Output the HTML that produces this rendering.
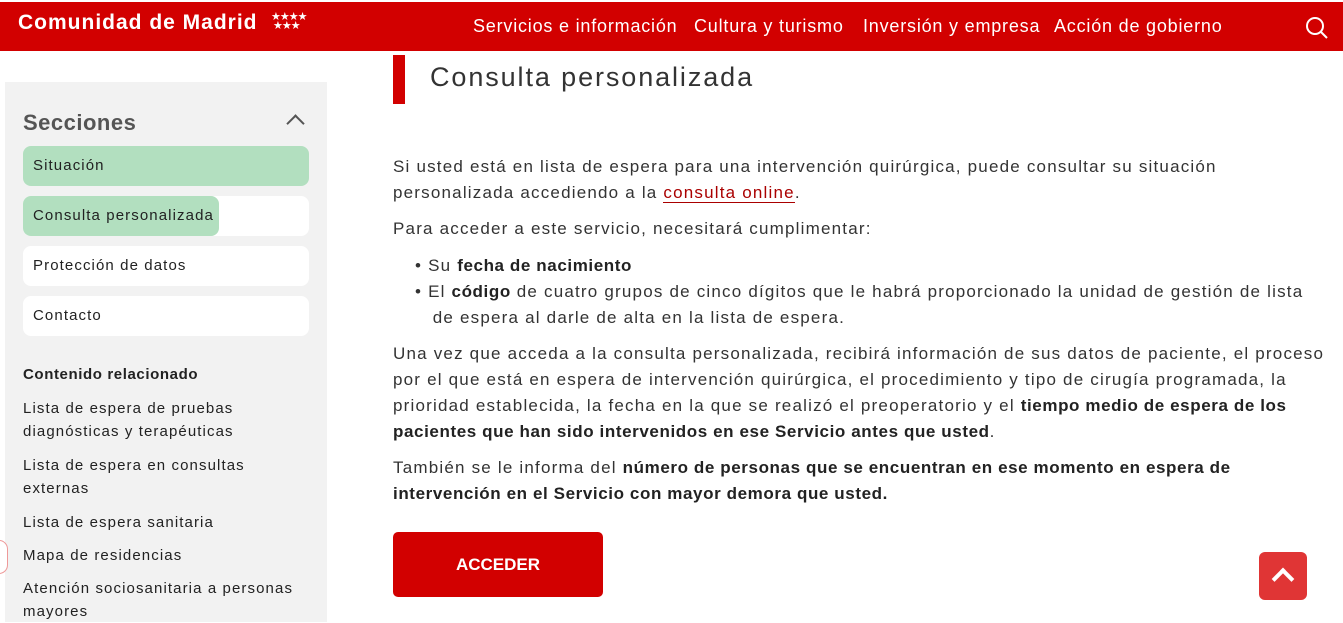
<!DOCTYPE html>
<html><head><meta charset="utf-8"><style>
*{margin:0;padding:0;box-sizing:border-box}
body{width:1343px;height:611px;overflow:hidden;background:#fff;font-family:"Liberation Sans",sans-serif;color:#333;position:relative}
.hdr{position:absolute;left:0;top:2px;width:1343px;height:49px;background:#d20000;color:#fff}
.logo{position:absolute;left:18px;top:9px;font-size:21px;font-weight:bold;letter-spacing:1px}
.stars{position:absolute;left:271px;top:11px;font-size:11px;line-height:9px;letter-spacing:-1px}
.nav{position:absolute;top:14px;font-size:18px;letter-spacing:.8px;white-space:nowrap}
.side{position:absolute;left:5px;top:82px;width:322px;height:540px;background:#f2f2f2}
.side h2{position:absolute;left:18px;top:28px;font-size:22px;color:#555;font-weight:bold;letter-spacing:.5px}
.chev{position:absolute;left:284px;top:35px;width:13px;height:13px;border-left:2px solid #555;border-top:2px solid #555;transform:rotate(45deg)}
.it{position:absolute;left:18px;width:286px;height:40px;background:#fff;border-radius:8px;font-size:15px;padding:11px 10px;color:#222;letter-spacing:1.1px;white-space:nowrap}
.g{background:#b2dfbf}
.rel{position:absolute;left:18px;font-size:15px;line-height:23px;color:#222;letter-spacing:1.1px;white-space:nowrap}
.main{position:absolute;left:393px;width:950px;font-size:17px;line-height:26px;color:#333;letter-spacing:1.2px;white-space:nowrap}
b{color:#222;letter-spacing:.6px}
</style></head><body>
<div class="hdr">
<div class="logo">Comunidad de Madrid</div>
<div class="stars">★★★★<br>&nbsp;★★★</div>
<div class="nav" style="left:473px">Servicios e información</div>
<div class="nav" style="left:694px">Cultura y turismo</div>
<div class="nav" style="left:863px">Inversión y empresa</div>
<div class="nav" style="left:1054px">Acción de gobierno</div>
<svg style="position:absolute;left:1305px;top:14px" width="24" height="24" viewBox="0 0 24 24" fill="none" stroke="#fff" stroke-width="2"><circle cx="10" cy="10" r="8"/><line x1="16" y1="16" x2="22" y2="22"/></svg>
</div>
<div class="side">
<h2>Secciones</h2><div class="chev"></div>
<div class="it g" style="top:64px">Situación</div>
<div class="it" style="top:114px;padding:0"><div style="background:#b2dfbf;width:196px;height:40px;border-radius:8px;padding:11px 10px">Consulta personalizada</div></div>
<div class="it" style="top:164px">Protección de datos</div>
<div class="it" style="top:214px">Contacto</div>
<div class="rel" style="top:281px;font-weight:bold;letter-spacing:.6px">Contenido relacionado</div>
<div class="rel" style="top:315px">Lista de espera de pruebas<br>diagnósticas y terapéuticas</div>
<div class="rel" style="top:372px">Lista de espera en consultas<br>externas</div>
<div class="rel" style="top:429px">Lista de espera sanitaria</div>
<div class="rel" style="top:462px">Mapa de residencias</div>
<div class="rel" style="top:495px">Atención sociosanitaria a personas<br>mayores</div>
</div>
<div style="position:absolute;left:-10px;top:540px;width:18px;height:34px;border:1px solid #e99;border-radius:9px;background:#fff"></div>
<div style="position:absolute;left:393px;top:55px;width:12px;height:49px;background:#d20000"></div>
<div style="position:absolute;left:430px;top:62px;font-size:27px;color:#333;letter-spacing:1.9px">Consulta personalizada</div>
<div class="main" style="top:154px">Si usted está en lista de espera para una intervención quirúrgica, puede consultar su situación<br>personalizada accediendo a la <span style="color:#a00;border-bottom:1px solid #a00">consulta online</span>.</div>
<div class="main" style="top:216px">Para acceder a este servicio, necesitará cumplimentar:</div>
<div class="main" style="top:253px;left:415px">• Su <b>fecha de nacimiento</b></div>
<div class="main" style="top:279px;left:415px">• El <b>código</b> de cuatro grupos de cinco dígitos que le habrá proporcionado la unidad de gestión de lista<br>&nbsp;&nbsp; de espera al darle de alta en la lista de espera.</div>
<div class="main" style="top:341px">Una vez que acceda a la consulta personalizada, recibirá información de sus datos de paciente, el proceso<br>por el que está en espera de intervención quirúrgica, el procedimiento y tipo de cirugía programada, la<br>prioridad establecida, la fecha en la que se realizó el preoperatorio y el <b>tiempo medio de espera de los<br>pacientes que han sido intervenidos en ese Servicio antes que usted</b>.</div>
<div class="main" style="top:455px">También se le informa del <b>número de personas que se encuentran en ese momento en espera de<br>intervención en el Servicio con mayor demora que usted.</b></div>
<div style="position:absolute;left:393px;top:532px;width:210px;height:65px;background:#d20000;border-radius:5px;color:#fff;font-weight:bold;font-size:17px;text-align:center;line-height:65px">ACCEDER</div>
<div style="position:absolute;left:1259px;top:552px;width:48px;height:48px;background:#e03535;border-radius:6px"><div style="position:absolute;left:16px;top:19px;width:16px;height:16px;border-left:4px solid #fff;border-top:4px solid #fff;transform:rotate(45deg)"></div></div>
</body></html>
